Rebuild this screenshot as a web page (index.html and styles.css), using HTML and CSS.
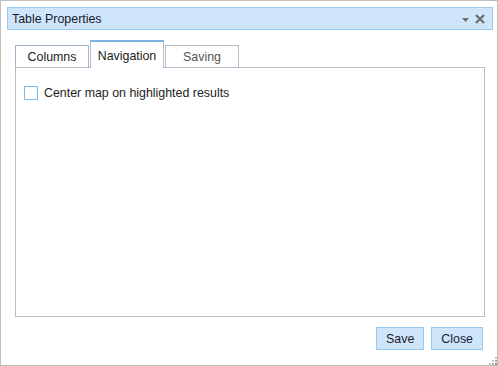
FILE: index.html
```html
<!DOCTYPE html>
<html lang="en">
<head>
  <meta charset="UTF-8">
  <title>Table Properties</title>
  <link rel="stylesheet" href="styles.css">
</head>
<body>
  <div class="dialog">
    <!-- Barra de título -->
    <div class="titlebar">
      <span class="title">Table Properties</span>
      <span class="title-tools">
        <svg class="tool-menu" width="7" height="4" viewBox="0 0 7 4"><path d="M0 0h7L3.5 4z" fill="#6b6b6b"/></svg>
        <svg class="tool-close" width="10" height="10" viewBox="0 0 10 10"><path d="M1 1l8 8M9 1l-8 8" stroke="#6b6b6b" stroke-width="2.2"/></svg>
      </span>
    </div>

    <!-- Abas -->
    <div class="tabs">
      <div class="tab">Columns</div>
      <div class="tab active">Navigation</div>
      <div class="tab muted">Saving</div>
    </div>
    <div class="panel">
      <label class="check-row">
        <span class="checkbox"></span>
        <span>Center map on highlighted results</span>
      </label>
    </div>

    <!-- Botões -->
    <div class="buttons">
      <button class="btn">Save</button>
      <button class="btn">Close</button>
    </div>

    <svg class="grip" width="8" height="8" viewBox="0 0 8 8">
      <rect x="6" y="0" width="2" height="2" fill="#c4c4c4"/>
      <rect x="3" y="3" width="2" height="2" fill="#c4c4c4"/>
      <rect x="6" y="3" width="2" height="2" fill="#a8a8a8"/>
      <rect x="0" y="6" width="2" height="2" fill="#c4c4c4"/>
      <rect x="3" y="6" width="2" height="2" fill="#a8a8a8"/>
      <rect x="6" y="6" width="2" height="2" fill="#909090"/>
    </svg>
  </div>
</body>
</html>
```

FILE: styles.css
```css
/* Estilização geral */
body {
  margin: 0;
  font-family: "Liberation Sans", Arial, sans-serif;
  font-size: 12.4px;
  color: #1e1e1e;
  background: #fff;
}
.dialog {
  position: relative;
  width: 498px;
  height: 366px;
  box-sizing: border-box;
  border: 1px solid #bdbdbd;
  padding: 6px 4px 0 6px;
  display: flex;
  flex-direction: column;
}
/* Barra de título */
.titlebar {
  height: 23px;
  box-sizing: border-box;
  border: 1px solid #9dcbee;
  background: #cfe6fa;
  display: flex;
  align-items: center;
  padding: 0 7px 0 4px;
}
.title {
  flex: 1;
  color: #1a1a2e;
}
.title-tools {
  display: flex;
  align-items: center;
  gap: 6px;
}
.tool-menu {
  margin-top: 2px;
}
/* Abas */
.tabs {
  display: flex;
  align-items: flex-end;
  gap: 1px;
  margin: 10px 8px 0 8px;
}
.tab {
  width: 74px;
  height: 22px;
  box-sizing: border-box;
  border: 1px solid #b5bccb;
  border-bottom: none;
  display: flex;
  align-items: center;
  justify-content: center;
  color: #222;
}
.tab:first-child {
  border-color: #9fb5cc;
}
.tab.active {
  position: relative;
  height: 28px;
  margin-bottom: -1px;
  padding-top: 1px;
  border-top: 2px solid #7fb2df;
  background: #fff;
}
.tab.muted {
  color: #555;
}
.panel {
  height: 250px;
  box-sizing: border-box;
  margin: 0 8px;
  border: 1px solid #b5bccb;
  padding: 18px 8px;
}
.check-row {
  display: flex;
  align-items: center;
  gap: 6px;
}
.checkbox {
  width: 14px;
  height: 14px;
  box-sizing: border-box;
  border: 1px solid #85b6de;
  background: #fff;
}
/* Botões */
.buttons {
  display: flex;
  justify-content: flex-end;
  gap: 7px;
  margin: 10px 10px 0 8px;
}
.btn {
  height: 23px;
  padding: 0 9px;
  border: 1px solid #97c9ef;
  background: #cfe6fa;
  font-family: inherit;
  font-size: 12.4px;
  color: #1a1a2e;
}
.grip {
  position: absolute;
  right: 0;
  bottom: 0;
}
```
